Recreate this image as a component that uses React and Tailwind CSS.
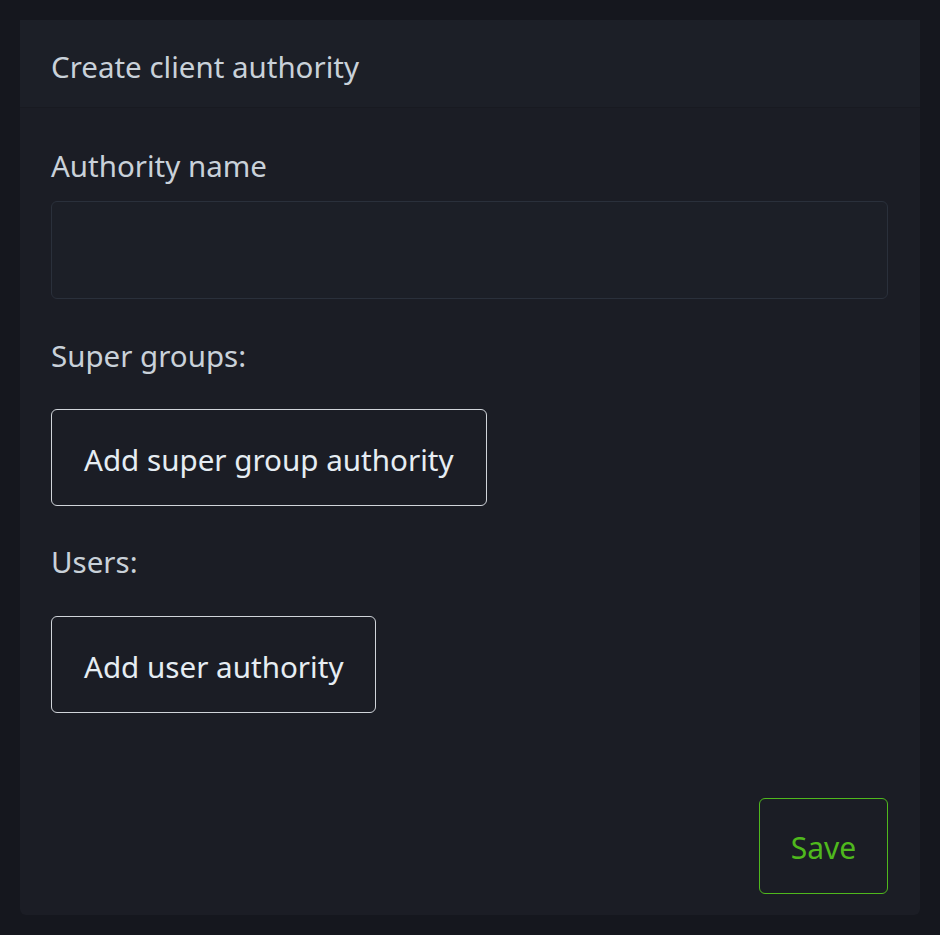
export default function App() {
  return (
    <div className="min-h-[935px] bg-[#15171e] p-[20px]" style={{ fontFamily: '"Noto Sans", "Open Sans", sans-serif' }}>
      <div className="rounded-[6px] bg-[#1b1d25]">
        <div className="flex h-[88px] items-center border-b border-[#181a21] bg-[#1c1f27] pl-[31px] pr-[32px] pt-[7px] text-[29.5px] text-[#c9d1d9]">
          Create client authority
        </div>
        <div className="pl-[31px] pr-[32px] pb-[21px]">
          <div className="mt-[39px] text-[29.5px] leading-[38px] text-[#c9d1d9]">Authority name</div>
          <div className="mt-[16px] h-[98px] rounded-[6px] border border-[#2a303b] bg-[#1c1f27]"></div>
          <div className="mt-[38px] text-[29.5px] leading-[38px] text-[#c9d1d9]">Super groups:</div>
          <div className="mt-[34px]">
            <button className="h-[97px] rounded-[6px] border border-[#d0d4da] px-[32px] pt-[5px] text-[29.6px] text-[#e6edf3]">
              Add super group authority
            </button>
          </div>
          <div className="mt-[37px] text-[29.5px] leading-[38px] text-[#c9d1d9]">Users:</div>
          <div className="mt-[35px]">
            <button className="h-[97px] rounded-[6px] border border-[#d0d4da] px-[32px] pt-[5px] text-[29.6px] text-[#e6edf3]">
              Add user authority
            </button>
          </div>
          <div className="mt-[85px] flex justify-end">
            <button className="h-[96px] w-[129px] rounded-[6px] border border-[#4fb81d] pt-[2px] text-[30px] text-[#4fb81d]">
              Save
            </button>
          </div>
        </div>
      </div>
    </div>
  );
}
